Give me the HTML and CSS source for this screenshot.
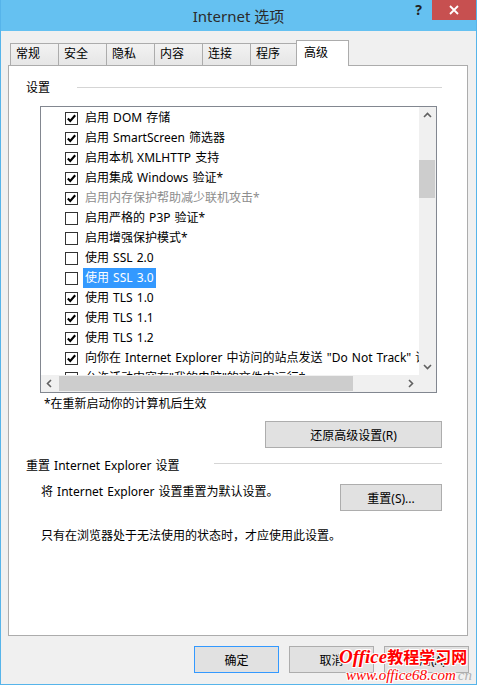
FILE: index.html
```html
<!DOCTYPE html>
<html>
<head>
  <meta charset="UTF-8">
  <title>Internet 选项</title>
  <link rel="stylesheet" href="styles.css">
</head>
<body>
  <div class="window">
    <div class="titlebar">
      <div></div>
      <div class="title">Internet 选项</div>
      <div class="title-buttons">
        <span class="help-btn">?</span>
        <span class="close-btn">
          <svg width="10" height="10" viewBox="0 0 10 10"><path d="M1 1 L9 9 M9 1 L1 9" stroke="#fff" stroke-width="1.8"/></svg>
        </span>
      </div>
    </div>

    <div class="dialog-body">
      <div class="tabs">
        <div class="tab">常规</div>
        <div class="tab">安全</div>
        <div class="tab">隐私</div>
        <div class="tab">内容</div>
        <div class="tab">连接</div>
        <div class="tab narrow">程序</div>
        <div class="tab active">高级</div>
      </div>

      <div class="tab-panel">
        <div class="group-header">
          <span>设置</span>
          <span class="group-line first-line"></span>
        </div>

        <div class="listbox">
          <div class="list-content">
            <div class="list-row"><span class="checkbox checked"></span><span class="row-label">启用 DOM 存储</span></div>
            <div class="list-row"><span class="checkbox checked"></span><span class="row-label">启用 SmartScreen 筛选器</span></div>
            <div class="list-row"><span class="checkbox checked"></span><span class="row-label">启用本机 XMLHTTP 支持</span></div>
            <div class="list-row"><span class="checkbox checked"></span><span class="row-label">启用集成 Windows 验证*</span></div>
            <div class="list-row disabled"><span class="checkbox checked"></span><span class="row-label">启用内存保护帮助减少联机攻击*</span></div>
            <div class="list-row"><span class="checkbox"></span><span class="row-label">启用严格的 P3P 验证*</span></div>
            <div class="list-row"><span class="checkbox"></span><span class="row-label">启用增强保护模式*</span></div>
            <div class="list-row"><span class="checkbox"></span><span class="row-label">使用 SSL 2.0</span></div>
            <div class="list-row selected"><span class="checkbox"></span><span class="row-label">使用 SSL 3.0</span></div>
            <div class="list-row"><span class="checkbox checked"></span><span class="row-label">使用 TLS 1.0</span></div>
            <div class="list-row"><span class="checkbox checked"></span><span class="row-label">使用 TLS 1.1</span></div>
            <div class="list-row"><span class="checkbox checked"></span><span class="row-label">使用 TLS 1.2</span></div>
            <div class="list-row"><span class="checkbox checked"></span><span class="row-label">向你在 Internet Explorer 中访问的站点发送 "Do Not Track" 请求</span></div>
            <div class="list-row"><span class="checkbox"></span><span class="row-label">允许活动内容在"我的电脑"的文件中运行*</span></div>
          </div>

          <div class="vscroll">
            <span class="scroll-arrow">
              <svg width="17" height="17" viewBox="0 0 17 17"><polyline points="5,10 8.5,6.5 12,10" fill="none" stroke="#606060" stroke-width="1.6"/></svg>
            </span>
            <div class="vtrack"><div class="vthumb"></div></div>
            <span class="scroll-arrow">
              <svg width="17" height="17" viewBox="0 0 17 17"><polyline points="5,7 8.5,10.5 12,7" fill="none" stroke="#606060" stroke-width="1.6"/></svg>
            </span>
          </div>

          <div class="hscroll">
            <span class="scroll-arrow">
              <svg width="17" height="17" viewBox="0 0 17 17"><polyline points="10,5 6.5,8.5 10,12" fill="none" stroke="#606060" stroke-width="1.6"/></svg>
            </span>
            <div class="htrack"><div class="hthumb"></div></div>
            <span class="scroll-arrow">
              <svg width="17" height="17" viewBox="0 0 17 17"><polyline points="7,5 10.5,8.5 7,12" fill="none" stroke="#606060" stroke-width="1.6"/></svg>
            </span>
          </div>

          <div class="scroll-corner"></div>
        </div>

        <div class="note">*在重新启动你的计算机后生效</div>

        <div class="button-row">
          <button class="btn restore-btn">还原高级设置(R)</button>
        </div>

        <div class="group-header reset-header">
          <span>重置 Internet Explorer 设置</span>
          <span class="group-line second-line"></span>
        </div>

        <div class="reset-row">
          <span class="reset-text">将 Internet Explorer 设置重置为默认设置。</span>
          <button class="btn reset-btn">重置(S)...</button>
        </div>

        <div class="reset-note">只有在浏览器处于无法使用的状态时，才应使用此设置。</div>
      </div>

      <div class="dialog-buttons">
        <button class="btn default-btn">确定</button>
        <button class="btn">取消</button>
        <button class="btn">应用(A)</button>
      </div>
    </div>

    <div class="watermark">
      <div class="wm-top"><span class="wm-office">Office</span>教程学习网</div>
      <div class="wm-url">www.office68.com<span class="wm-cn">cn</span></div>
    </div>
  </div>
</body>
</html>
```

FILE: styles.css
```css
* {
  box-sizing: border-box;
}

body {
  margin: 0;
  font-family: "Noto Sans", "Noto Sans CJK SC", sans-serif;
  font-size: 12px;
  line-height: 16px;
  color: #000;
  background: #f0f0f0;
}

.window {
  position: relative;
  width: 477px;
  height: 685px;
  background: #f0f0f0;
  border: 1px solid #56b4ea;
  border-top: none;
  overflow: hidden;
}

/* title bar */
.titlebar {
  height: 31px;
  background: #65c1f1;
  display: grid;
  grid-template-columns: 1fr auto 1fr;
  align-items: center;
}

.title {
  font-size: 15px;
  color: #2b2b2b;
  padding-top: 1px;
}

.title-buttons {
  justify-self: end;
  align-self: start;
  display: flex;
  align-items: flex-start;
}

.help-btn {
  font-weight: bold;
  font-size: 14px;
  line-height: 20px;
  color: #222;
  margin-right: 10px;
}

.close-btn {
  width: 44px;
  height: 20px;
  background: #c75050;
  display: flex;
  align-items: center;
  justify-content: center;
}

/* body */
.dialog-body {
  padding: 9px 0 0 7px;
}

.tabs {
  display: flex;
  align-items: flex-end;
  height: 25px;
  padding-left: 2px;
}

.tab {
  width: 49px;
  height: 22px;
  margin-right: -1px;
  padding: 2px 0 0 5px;
  border: 1px solid #acacac;
  border-bottom: none;
  background: linear-gradient(#f2f2f2, #e6e6e6);
}

.tab.narrow {
  width: 47px;
}

.tab.active {
  position: relative;
  z-index: 1;
  width: 53px;
  height: 26px;
  margin-bottom: -1px;
  padding: 4px 0 0 7px;
  background: #fff;
}

.tab-panel {
  width: 460px;
  height: 571px;
  border: 1px solid #acacac;
  background: #fff;
  padding: 14px 25px 0 17px;
  word-spacing: 1px;
}

.group-header {
  display: flex;
  align-items: center;
}

.group-line {
  flex: 1;
  height: 1px;
  background: #d5d5d5;
  margin-top: -2px;
}

.first-line {
  margin-left: 27px;
}

.second-line {
  margin-left: 34px;
  margin-top: -5px;
}

/* list box */
.listbox {
  width: 397px;
  height: 287px;
  margin: 10px 0 0 14px;
  border: 1px solid #828790;
  display: grid;
  grid-template-columns: 1fr 17px;
  grid-template-rows: 1fr 17px;
}

.list-content {
  overflow: hidden;
  padding-top: 1px;
}

.list-row {
  display: flex;
  align-items: center;
  height: 20px;
  padding-left: 24px;
  white-space: nowrap;
}

.checkbox {
  flex: none;
  width: 13px;
  height: 13px;
  border: 1px solid #333;
  background: #fff;
}

.checkbox.checked {
  background: #fff url("data:image/svg+xml,%3Csvg xmlns='http://www.w3.org/2000/svg' width='11' height='11'%3E%3Cpolyline points='1.8,5.4 4.3,8 9.2,2.2' fill='none' stroke='%23000' stroke-width='2.1'/%3E%3C/svg%3E") no-repeat center;
}

.row-label {
  margin-left: 5px;
  padding: 0 2px;
  line-height: 20px;
}

.list-row.disabled .row-label {
  color: #8d8d8d;
}

.list-row.selected .row-label {
  background: #3399ff;
  color: #fff;
}

.vscroll,
.hscroll {
  background: #f0f0f0;
  display: flex;
}

.vscroll {
  flex-direction: column;
}

.scroll-arrow {
  flex: none;
  width: 17px;
  height: 17px;
  display: block;
}

.scroll-arrow svg {
  display: block;
}

.vtrack,
.htrack {
  flex: 1;
}

.vthumb {
  width: 16px;
  height: 38px;
  margin-top: 36px;
  background: #cdcdcd;
}

.hthumb {
  width: 294px;
  height: 15px;
  margin: 1px 0 0 1px;
  background: #cdcdcd;
}

.scroll-corner {
  background: #f0f0f0;
}

.note {
  margin: 3px 0 0 18px;
}

/* buttons */
.btn {
  font-family: inherit;
  font-size: 12px;
  color: #000;
  height: 27px;
  width: 85px;
  padding: 0;
  border: 1px solid #adadad;
  background: #e1e1e1;
}

.button-row {
  display: flex;
  justify-content: flex-end;
  margin-top: 9px;
}

.restore-btn {
  width: 177px;
}

.reset-header {
  margin-top: 10px;
}

.reset-row {
  display: flex;
  justify-content: space-between;
  align-items: flex-start;
  margin-top: 10px;
}

.reset-text {
  margin-left: 15px;
}

.reset-btn {
  width: 102px;
}

.reset-note {
  margin: 17px 0 0 15px;
}

.dialog-buttons {
  display: flex;
  justify-content: flex-end;
  gap: 10px;
  margin-top: 10px;
  padding-right: 7px;
}

.default-btn {
  border: 1px solid #3399ff;
}

/* site watermark over the corner */
.watermark {
  position: absolute;
  left: 338px;
  top: 645px;
  color: #ff0000;
  text-shadow: 1px 1px 0 #fff, -1px -1px 0 #fff, 1px -1px 0 #fff, -1px 1px 0 #fff;
  white-space: nowrap;
}

.wm-top {
  font-family: "Noto Sans CJK SC", sans-serif;
  font-weight: bold;
  font-size: 16px;
  line-height: 22px;
}

.wm-office {
  font-family: "Liberation Serif", serif;
  font-style: italic;
  font-size: 19px;
}

.wm-url {
  font-family: "Liberation Serif", serif;
  font-style: italic;
  font-size: 15px;
  line-height: 14px;
  margin-left: 7px;
}

.wm-cn {
  color: #b0b0b0;
  text-shadow: none;
  margin-left: 2px;
}
```
